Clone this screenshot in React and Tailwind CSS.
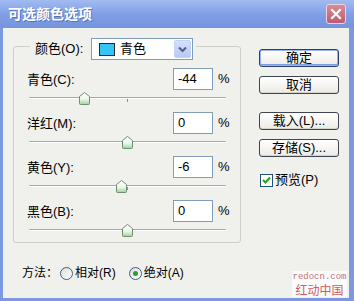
import React from "react";

const FONT = "font-['Liberation_Sans','Noto_Sans_CJK_SC',sans-serif]";

function Thumb() {
  return (
    <svg width="11" height="13" viewBox="0 0 11 13">
      <defs>
        <linearGradient id="tg" x1="0" y1="0" x2="0" y2="1">
          <stop offset="0" stopColor="#ffffff" />
          <stop offset="0.55" stopColor="#eef7ea" />
          <stop offset="1" stopColor="#9fd19a" />
        </linearGradient>
      </defs>
      <path d="M5.5 0.5 L10.5 4.5 L10.5 11.5 Q10.5 12.5 9.5 12.5 L1.5 12.5 Q0.5 12.5 0.5 11.5 L0.5 4.5 Z" fill="url(#tg)" stroke="#6f8f73" strokeWidth="1" />
    </svg>
  );
}

function SliderRow({ label, value }) {
  const w = 197;
  const pos = ((value + 100) / 200) * w;
  return (
    <div className="flex flex-col">
      <div className="flex items-center h-[22px] pl-[13px]">
        <span className="w-[146px] text-[13px] text-black leading-none">{label}</span>
        <div className="w-[40px] h-[22px] bg-white border border-[#7f9db9] flex items-center pl-[4px] text-[13px] text-black">
          {value}
        </div>
        <span className="ml-[5px] text-[13px] text-black">%</span>
      </div>
      <div className="relative ml-[15px] w-[197px] h-[18px]">
        <div className="absolute left-0 right-0 top-[7px] h-[2px] border-t border-[#a7a6aa] border-b border-b-white bg-[#dcdcd8] rounded-[1px]" />
        <div className="absolute left-[98px] top-[9px] w-px h-[3px] bg-[#8e8e8e]" />
        <div className="absolute top-[2px]" style={{ left: pos - 5.5 }}>
          <Thumb />
        </div>
      </div>
    </div>
  );
}

function Button({ children, primary }) {
  return (
    <div
      className={
        "w-[80px] h-[18px] rounded-[3px] border flex items-center justify-center text-[13px] text-black bg-gradient-to-b from-white to-[#ecebe6] " +
        (primary
          ? "border-[#27406e] shadow-[inset_0_0_0_1px_#9bb5ee,inset_0_-1px_0_1px_#7e9de0]"
          : "border-[#3d4650] shadow-[inset_0_-1px_0_#d6d4cc]")
      }
    >
      {children}
    </div>
  );
}

function Radio({ checked }) {
  return (
    <span className="w-[13px] h-[13px] rounded-full border border-[#3f5f86] bg-gradient-to-br from-[#dcdcd6] to-white flex items-center justify-center">
      {checked && <span className="w-[5px] h-[5px] rounded-full bg-[#2aa12a]" />}
    </span>
  );
}

export default function App() {
  return (
    <div className={"relative w-[354px] h-[301px] flex flex-col overflow-hidden " + FONT}>
      <div className="h-[28px] flex items-center justify-between pl-[8px] pr-[8px] bg-gradient-to-b from-[#a2bbf1] via-[#809fe6] to-[#7594df]">
        <span className="text-white text-[14px] font-bold [text-shadow:1px_1px_0_#5a73b8]">可选颜色选项</span>
        <div className="w-[20px] h-[20px] rounded-[3px] border border-[#efd2d8] bg-gradient-to-b from-[#d88a98] to-[#bd5d70] flex items-center justify-center">
          <svg width="12" height="12" viewBox="0 0 12 12">
            <path d="M2 2 L10 10 M10 2 L2 10" stroke="white" strokeWidth="2.2" strokeLinecap="square" />
          </svg>
        </div>
      </div>
      <div className="flex-1 flex bg-[#f0f0ec] border-l-[3px] border-r-[5px] border-b-[3px] border-[#7b98e1]">
        <div className="flex flex-col pl-[10px] pt-[4px]">
          <fieldset className="w-[228px] border border-[#cfcfc6] rounded-[3px] m-0 p-0">
            <legend className="ml-[16px] px-[5px] pr-[3px] pt-[6px] flex items-center">
              <span className="w-[56px] text-[13px] text-black">颜色(O):</span>
              <div className="w-[102px] h-[22px] bg-white border border-[#7f9db9] flex items-center pl-[7px] pr-[1px]">
                <span className="w-[16px] h-[13px] bg-[#33c5f5] border border-[#2a2a2a]" />
                <span className="ml-[5px] text-[13px] text-black flex-1">青色</span>
                <span className="w-[17px] h-[18px] rounded-[2px] bg-gradient-to-b from-[#d4e0fd] to-[#b6c9f7] border border-[#c3d2f6] flex items-center justify-center">
                  <svg width="9" height="7" viewBox="0 0 9 7">
                    <path d="M1 1.5 L4.5 5 L8 1.5" fill="none" stroke="#4d6185" strokeWidth="2" />
                  </svg>
                </span>
              </div>
            </legend>
            <div className="flex flex-col gap-[4px] pt-[8px] pb-[2px]">
              <SliderRow label="青色(C):" value={-44} />
              <SliderRow label="洋红(M):" value={0} />
              <SliderRow label="黄色(Y):" value={-6} />
              <SliderRow label="黑色(B):" value={0} />
            </div>
          </fieldset>
          <div className="mt-[22px] h-[16px] flex items-center pl-[9px] text-[12px] text-black">
            <span>方法：</span>
            <span className="ml-[2px]"><Radio /></span>
            <span className="ml-[2px]">相对(R)</span>
            <span className="ml-[13px]"><Radio checked /></span>
            <span className="ml-[2px]">绝对(A)</span>
          </div>
        </div>
        <div className="flex flex-col pl-[18px] pt-[21px]">
          <Button primary>确定</Button>
          <div className="mt-[9px]"><Button>取消</Button></div>
          <div className="mt-[18px]"><Button>载入(L)...</Button></div>
          <div className="mt-[9px]"><Button>存储(S)...</Button></div>
          <div className="mt-[16px] flex items-center h-[14px] pl-[1px]">
            <span className="w-[13px] h-[13px] bg-white border border-[#1c5180] flex items-center justify-center">
              <svg width="9" height="8" viewBox="0 0 9 8">
                <path d="M1 4 L3.5 6.5 L8 1.5" fill="none" stroke="#21a121" strokeWidth="2" />
              </svg>
            </span>
            <span className="ml-[2px] text-[13px] text-black">预览(P)</span>
          </div>
        </div>
      </div>
      <div className="absolute left-[292px] top-[271px] w-[55px] h-[26px] bg-[#fbfbfb] flex flex-col items-center">
        <span className="h-[10px] flex items-center font-['Liberation_Mono',monospace] text-[9px] leading-[10px] text-[#c27272] mt-[1px]">redocn.com</span>
        <span className="h-[14px] flex items-center font-['Noto_Sans_CJK_SC',sans-serif] text-[12px] leading-[14px] text-[#d25a5a] mt-[1px]">红动中国</span>
      </div>
    </div>
  );
}
